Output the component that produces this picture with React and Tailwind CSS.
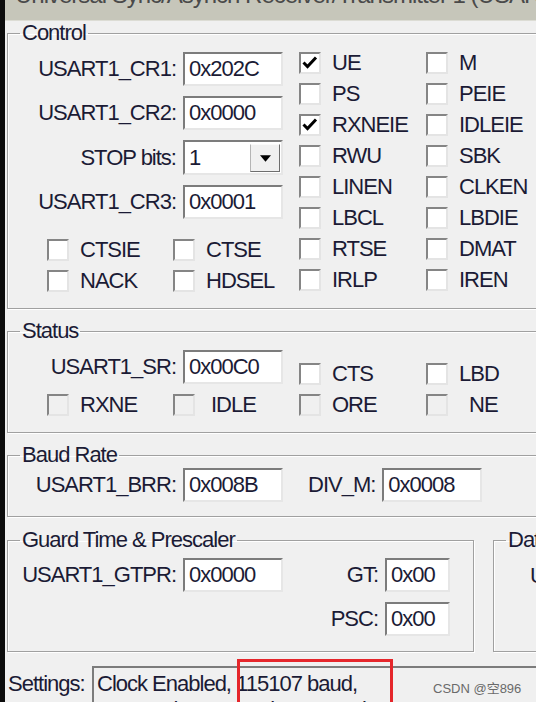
import React from "react";

const groupCls =
  "border border-[#a0a0a0] shadow-[inset_1px_1px_0_#fff,1px_1px_0_#fff]";

function Box({ checked, disabled }) {
  return (
    <span
      className={`relative block w-[22px] h-[22px] shrink-0 border-2 border-t-[#858585] border-l-[#858585] border-r-[#e4e4e4] border-b-[#e4e4e4] ${
        disabled ? "bg-[#f0f0f0]" : "bg-white"
      }`}
    >
      {checked && (
        <svg viewBox="0 0 18 18" className="absolute inset-0 w-[18px] h-[18px]">
          <path d="M2.5 8.5 L6.5 12.5 L15 3.5" fill="none" stroke="#000" strokeWidth="3" />
        </svg>
      )}
    </span>
  );
}

function Check({ label, checked, disabled, shift = "" }) {
  return (
    <div className="flex items-center h-[22px] gap-[11px] leading-[22px]">
      <Box checked={checked} disabled={disabled} />
      <span className={shift}>{label}</span>
    </div>
  );
}

function Edit({ value, w = "w-[100px]" }) {
  return (
    <div
      className={`${w} h-[34px] border-2 border-t-[#7c7c7c] border-l-[#7c7c7c] border-r-[#e6e6e6] border-b-[#e6e6e6] bg-white pl-[4px] flex items-center leading-[22px]`}
    >
      {value}
    </div>
  );
}

function Field({ label, value, w }) {
  return (
    <div className="flex items-center justify-end gap-[7px]">
      <span className="leading-[22px]">{label}</span>
      <Edit value={value} w={w} />
    </div>
  );
}

function Combo() {
  return (
    <div className="w-[100px] h-[35px] border-2 border-t-[#7c7c7c] border-l-[#7c7c7c] border-r-[#e6e6e6] border-b-[#e6e6e6] bg-white flex">
      <span className="flex-1 pl-[4px] flex items-center leading-[22px]">1</span>
      <span className="w-[30px] mt-[2px] mb-[1px] mr-[1px] bg-[#f0f0f0] border border-t-[#fafafa] border-l-[#b4b4b4] border-r-[#6e6e6e] border-b-[#6e6e6e] flex items-center justify-center">
        <svg viewBox="0 0 10 6" className="w-[11px] h-[7px]">
          <path d="M0 0 H10 L5 6 Z" fill="#000" />
        </svg>
      </span>
    </div>
  );
}

function Legend({ children }) {
  return <legend className="ml-[12px] px-[2px] leading-[22px]">{children}</legend>;
}

export default function App() {
  return (
    <div className="relative w-[536px] h-[702px] overflow-hidden flex bg-[#f0f0f0] font-['Liberation_Sans',Arial,sans-serif] text-[22px] tracking-[-1px] text-[#1b1b35]">
      <div className="w-[5px] shrink-0 bg-[#0c0c0c]" />

      <div className="flex-1 flex flex-col min-w-0">
        <div className="h-[21px] shrink-0 overflow-hidden bg-[#c6c6ba] border-b border-[#dcdcd4]">
          <div className="-mt-[17px] pl-[10px] text-[24px] leading-[24px] whitespace-nowrap text-[#4a4a4a]">
            Universal Sync/Asynch Receiver/Transmitter 1 (USART1)
          </div>
        </div>

        {/* Control */}
        <fieldset className={`ml-[2px] mt-[1px] w-[600px] shrink-0 pt-[8px] pb-[16px] ${groupCls}`}>
          <Legend>Control</Legend>
          <div className="flex">
            <div className="w-[275px] flex flex-col">
              <div className="flex flex-col gap-[10px]">
                <Field label="USART1_CR1:" value="0x202C" />
                <Field label="USART1_CR2:" value="0x0000" />
                <div className="flex items-center justify-end gap-[7px]">
                  <span className="leading-[22px]">STOP bits:</span>
                  <Combo />
                </div>
                <Field label="USART1_CR3:" value="0x0001" />
              </div>
              <div className="mt-[20px] pl-[39px] grid grid-cols-[126px_1fr] gap-y-[9px]">
                <Check label="CTSIE" />
                <Check label="CTSE" />
                <Check label="NACK" />
                <Check label="HDSEL" />
              </div>
            </div>
            <div className="ml-[16px] w-[127px] flex flex-col gap-[9px]">
              <Check label="UE" checked />
              <Check label="PS" />
              <Check label="RXNEIE" checked />
              <Check label="RWU" />
              <Check label="LINEN" />
              <Check label="LBCL" />
              <Check label="RTSE" />
              <Check label="IRLP" />
            </div>
            <div className="flex flex-col gap-[9px]">
              <Check label="M" />
              <Check label="PEIE" />
              <Check label="IDLEIE" />
              <Check label="SBK" />
              <Check label="CLKEN" />
              <Check label="LBDIE" />
              <Check label="DMAT" />
              <Check label="IREN" />
            </div>
          </div>
        </fieldset>

        {/* Status */}
        <fieldset className={`ml-[2px] mt-[11px] w-[600px] shrink-0 pt-[8px] pb-[16px] ${groupCls}`}>
          <Legend>Status</Legend>
          <div className="flex">
            <div className="w-[275px] flex flex-col">
              <Field label="USART1_SR:" value="0x00C0" />
              <div className="mt-[10px] pl-[39px] grid grid-cols-[126px_1fr]">
                <Check label="RXNE" disabled />
                <Check label="IDLE" disabled shift="ml-[5px]" />
              </div>
            </div>
            <div className="ml-[16px] w-[127px] pt-[13px] flex flex-col gap-[9px]">
              <Check label="CTS" />
              <Check label="ORE" disabled />
            </div>
            <div className="pt-[13px] flex flex-col gap-[9px]">
              <Check label="LBD" />
              <Check label="NE" disabled shift="ml-[10px]" />
            </div>
          </div>
        </fieldset>

        {/* Baud Rate */}
        <fieldset className={`ml-[2px] mt-[11px] w-[600px] shrink-0 pt-[2px] pb-[14px] ${groupCls}`}>
          <Legend>Baud Rate</Legend>
          <div className="flex items-center">
            <div className="w-[275px]">
              <Field label="USART1_BRR:" value="0x008B" />
            </div>
            <div className="ml-[25px] flex items-center gap-[7px]">
              <span className="leading-[22px]">DIV_M:</span>
              <Edit value="0x0008" />
            </div>
          </div>
        </fieldset>

        {/* Guard Time & Prescaler + Data */}
        <div className="ml-[2px] mt-[12px] flex shrink-0">
          <fieldset className={`w-[467px] shrink-0 pt-[7px] pb-[15px] ${groupCls}`}>
            <Legend>Guard Time &amp; Prescaler</Legend>
            <div className="flex">
              <div className="w-[275px]">
                <Field label="USART1_GTPR:" value="0x0000" />
              </div>
              <div className="ml-auto pr-[23px] flex flex-col gap-[10px]">
                <Field label="GT:" value="0x00" w="w-[65px]" />
                <Field label="PSC:" value="0x00" w="w-[65px]" />
              </div>
            </div>
          </fieldset>
          <fieldset className={`ml-[19px] w-[200px] shrink-0 pt-[7px] ${groupCls}`}>
            <Legend>Data</Legend>
            <div className="pl-[36px] h-[34px] flex items-center whitespace-nowrap">USART1_DR:</div>
          </fieldset>
        </div>

        {/* Settings */}
        <div className="mt-[14px] flex items-start shrink-0">
          <span className="w-[87px] shrink-0 pl-[3px] mt-[6px] leading-[24px]">Settings:</span>
          <div className="w-[600px] shrink-0 h-[60px] border-2 border-t-[#7c7c7c] border-l-[#7c7c7c] border-r-[#e6e6e6] border-b-[#e6e6e6] bg-[#f0f0f0] pl-[3px] pt-[4px] leading-[24px]">
            <div>Clock Enabled, 115107 baud,</div>
            <div className="mt-[2px]">1 Stop Bit, 8 Data Bits, No Parity</div>
          </div>
        </div>
      </div>

      {/* annotation + watermark */}
      <div className="absolute left-[237px] top-[659px] w-[156px] h-[60px] border-[3px] border-[#e5262b]" />
      <div className="absolute left-[433px] top-[679px] text-[13px] tracking-normal text-[#6a6a6a] font-['Liberation_Sans','Noto_Sans_CJK_SC',sans-serif]">
        CSDN @空896
      </div>
    </div>
  );
}
